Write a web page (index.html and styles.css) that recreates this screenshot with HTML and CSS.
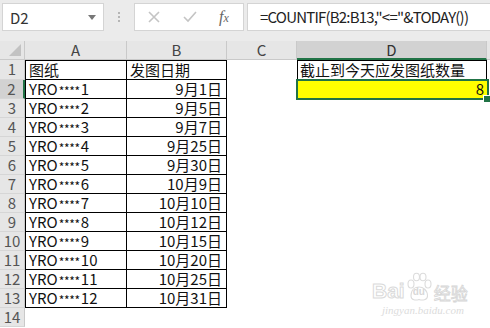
FILE: index.html
```html
<!DOCTYPE html>
<html>
<head>
<meta charset="utf-8">
<link rel="stylesheet" href="styles.css">
</head>
<body>
<div class="app">
  <div class="toolbar">
    <div class="namebox">
      <span class="name">D2</span>
      <svg class="dd" width="8" height="5" viewBox="0 0 8 5"><path d="M0 0H8L4 5Z" fill="#777"/></svg>
    </div>
    <div class="sep"><i></i><i></i><i></i></div>
    <div class="fbtns">
      <svg width="14" height="14" viewBox="0 0 14 14"><path d="M2 2L12 12M12 2L2 12" stroke="#c4c4c4" stroke-width="1.6"/></svg>
      <svg width="16" height="14" viewBox="0 0 16 14"><path d="M2 7L6 11L14 2" stroke="#c4c4c4" stroke-width="1.6" fill="none"/></svg>
      <span class="fx">f<span class="fxx">x</span></span>
    </div>
    <div class="formula">=COUNTIF(B2:B13,"&lt;="&amp;TODAY())</div>
  </div>
  <div class="sheet">
    <div class="corner"><svg width="12" height="12" viewBox="0 0 12 12"><path d="M12 0V12H0Z" fill="#c2c2c2"/></svg></div>
    <div class="ch">A</div><div class="ch">B</div><div class="ch">C</div><div class="ch sel">D</div><div class="ch last"></div>

    <div class="rh">1</div><div class="c t l top">图纸</div><div class="c t top">发图日期</div><div class="c"></div><div class="c t l top lb d1">截止到今天应发图纸数量</div><div class="c"></div>
    <div class="rh rsel">2</div><div class="c t l">YRO<span class="ast">****</span>1</div><div class="c t r">9月1日</div><div class="c"></div><div class="c active">8</div><div class="c"></div>
    <div class="rh">3</div><div class="c t l">YRO<span class="ast">****</span>2</div><div class="c t r">9月5日</div><div class="c"></div><div class="c"></div><div class="c"></div>
    <div class="rh">4</div><div class="c t l">YRO<span class="ast">****</span>3</div><div class="c t r">9月7日</div><div class="c"></div><div class="c"></div><div class="c"></div>
    <div class="rh">5</div><div class="c t l">YRO<span class="ast">****</span>4</div><div class="c t r">9月25日</div><div class="c"></div><div class="c"></div><div class="c"></div>
    <div class="rh">6</div><div class="c t l">YRO<span class="ast">****</span>5</div><div class="c t r">9月30日</div><div class="c"></div><div class="c"></div><div class="c"></div>
    <div class="rh">7</div><div class="c t l">YRO<span class="ast">****</span>6</div><div class="c t r">10月9日</div><div class="c"></div><div class="c"></div><div class="c"></div>
    <div class="rh">8</div><div class="c t l">YRO<span class="ast">****</span>7</div><div class="c t r">10月10日</div><div class="c"></div><div class="c"></div><div class="c"></div>
    <div class="rh">9</div><div class="c t l">YRO<span class="ast">****</span>8</div><div class="c t r">10月12日</div><div class="c"></div><div class="c"></div><div class="c"></div>
    <div class="rh">10</div><div class="c t l">YRO<span class="ast">****</span>9</div><div class="c t r">10月15日</div><div class="c"></div><div class="c"></div><div class="c"></div>
    <div class="rh">11</div><div class="c t l">YRO<span class="ast">****</span>10</div><div class="c t r">10月20日</div><div class="c"></div><div class="c"></div><div class="c"></div>
    <div class="rh">12</div><div class="c t l">YRO<span class="ast">****</span>11</div><div class="c t r">10月25日</div><div class="c"></div><div class="c"></div><div class="c"></div>
    <div class="rh">13</div><div class="c t l">YRO<span class="ast">****</span>12</div><div class="c t r">10月31日</div><div class="c"></div><div class="c"></div><div class="c"></div>
    <div class="rh">14</div><div class="c"></div><div class="c"></div><div class="c"></div><div class="c"></div><div class="c"></div>
  </div>
  <div class="watermark">
    <div class="wm-top">
      <span class="wm-bai">Bai</span>
      <span class="wm-du">
        <svg width="26" height="30" viewBox="0 0 26 30"><g fill="none" stroke="#dcdcdc" stroke-width="1.1"><ellipse cx="5" cy="12" rx="3" ry="4"/><ellipse cx="10.5" cy="5" rx="3" ry="3.8"/><ellipse cx="17" cy="5" rx="3" ry="3.8"/><ellipse cx="22" cy="12" rx="3" ry="4"/><path d="M5 24C5 17 9.5 15 13 15C17 15 21.5 18 21.5 24C21.5 28.5 16 28.5 13 27.5C10 28.5 5 28.5 5 24Z"/></g></svg>
        <span class="wm-dutext">du</span>
      </span>
      <span class="wm-jy">经验</span>
    </div>
    <div class="wm-url">jingyan.baidu.com</div>
  </div>
</div>
</body>
</html>
```
FILE: styles.css
```css
* { box-sizing: border-box; }
html, body { margin: 0; padding: 0; background: #fff; }
body {
  font-family: "Noto Sans CJK SC", "Noto Sans", sans-serif;
  width: 490px;
  height: 328px;
  overflow: hidden;
}
.app { position: relative; width: 490px; height: 328px; overflow: hidden; }

.toolbar {
  height: 41px;
  background: #ebebeb;
  display: flex;
  align-items: flex-start;
  padding-top: 3px;
  padding-left: 2px;
}
.namebox {
  width: 102px;
  height: 28px;
  background: #fff;
  border: 1px solid #d4d4d4;
  display: flex;
  align-items: center;
  justify-content: space-between;
  padding: 0 7px 0 7px;
}
.name { font-size: 15px; color: #333; line-height: 1; }
.dd { margin-top: 1px; }
.sep {
  width: 30px;
  height: 28px;
  display: flex;
  flex-direction: column;
  align-items: center;
  justify-content: center;
  gap: 2px;
}
.sep i { display: block; width: 2px; height: 2px; background: #b5b5b5; }
.fbtns {
  width: 110px;
  height: 28px;
  background: #fff;
  border: 1px solid #d4d4d4;
  display: flex;
  align-items: center;
  padding-left: 12px;
  gap: 21px;
}
.fx {
  font-family: "Liberation Serif", serif;
  font-style: italic;
  font-size: 16px;
  color: #666;
  line-height: 1;
}
.fxx { font-size: 12px; }
.formula {
  margin-left: 3px;
  flex: 1;
  height: 28px;
  background: #fff;
  border: 1px solid #d4d4d4;
  border-right: none;
  font-size: 15px;
  letter-spacing: -0.8px;
  color: #222;
  line-height: 26px;
  padding-left: 12px;
  white-space: nowrap;
}

.sheet {
  display: grid;
  grid-template-columns: 25px 102px 100px 70px 190px 1fr;
  grid-template-rows: 19px 20px repeat(13, 19px);
  font-size: 15px;
}
.corner {
  background: #e6e6e6;
  border-right: 1px solid #c9c9c9;
  border-bottom: 1px solid #c9c9c9;
  display: flex;
  align-items: flex-end;
  justify-content: flex-end;
  padding: 0 3px 3px 0;
}
.ch {
  background: #e6e6e6;
  border-right: 1px solid #c9c9c9;
  border-bottom: 1px solid #c9c9c9;
  color: #444;
  text-align: center;
  line-height: 18px;
  font-size: 15px;
}
.ch.sel { background: #d2d2d2; border-bottom: 2px solid #217346; color: #333; }
.ch.last { border-right: none; }
.rh {
  background: #e6e6e6;
  border-right: 1px solid #c9c9c9;
  border-bottom: 1px solid #d6d6d6;
  color: #555;
  text-align: center;
  line-height: 18px;
  font-size: 15px;
}
.rh.rsel { background: #d2d2d2; border-right: 2px solid #217346; }
.c {
  line-height: 18px;
  white-space: nowrap;
  color: #111;
  padding: 0 4px 0 3px;
}
.c.t { border-right: 1px solid #000; border-bottom: 1px solid #000; }
.c.l { border-left: 1px solid #000; }
.c.top { border-top: 1px solid #000; }
.c.r { text-align: right; }
.ast {
  font-size: 12px;
  letter-spacing: -0.3px;
  vertical-align: -1px;
  margin: 0 1px;
}
.d1 { font-size: 15px; line-height: 18px; padding-left: 2px; }
.active {
  position: relative;
  background: #ffff00;
  text-align: right;
  padding-right: 3px;
}
.active::before {
  content: "";
  position: absolute;
  left: -1px; right: -2px; top: -1px; bottom: -1px;
  border: 2px solid #217346;
}
.active::after {
  content: "";
  position: absolute;
  right: -4px; bottom: -4px;
  width: 6px; height: 6px;
  background: #217346;
  border: 1px solid #fff;
}

.watermark {
  position: absolute;
  left: 372px;
  top: 272px;
  color: #dedede;
}
.wm-top { display: flex; align-items: flex-end; height: 30px; }
.wm-bai {
  font-family: "Liberation Sans", sans-serif;
  font-size: 21px;
  font-weight: bold;
  color: #fff;
  -webkit-text-stroke: 1px #dadada;
  line-height: 1;
  margin-bottom: 1px;
}
.wm-du { position: relative; width: 26px; height: 30px; margin-left: 1px; }
.wm-du svg { position: absolute; left: 0; top: 0; }
.wm-dutext {
  position: absolute;
  left: 7px; top: 15px;
  font-family: "Liberation Sans", sans-serif;
  font-size: 10px;
  line-height: 1;
  color: #d8d8d8;
  font-weight: bold;
}
.wm-jy {
  font-size: 17px;
  color: #fff;
  -webkit-text-stroke: 0.8px #d6d6d6;
  line-height: 1;
  margin-left: 2px;
  margin-bottom: 1px;
}
.wm-url {
  font-family: "Liberation Serif", serif;
  font-style: italic;
  font-size: 11px;
  line-height: 12px;
  color: #dcdcdc;
  margin-top: 2px;
  padding-left: 10px;
}
```
